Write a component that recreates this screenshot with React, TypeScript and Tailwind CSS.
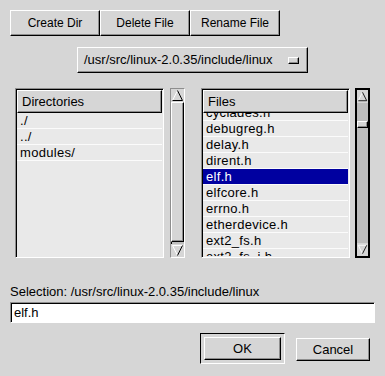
import React from 'react'

const raised =
  'border border-t-white border-l-white border-b-black border-r-black shadow-[inset_-1px_-1px_0_#8e8e8e]'
const sunken =
  'border border-t-[#8e8e8e] border-l-[#8e8e8e] border-b-white border-r-white shadow-[inset_1px_1px_0_#000]'

function ToolButton({ label }: { label: string }) {
  return (
    <div className={`${raised} w-[90px] h-[26px] flex items-center justify-center bg-[#d6d6d6] text-[12px]`}>
      {label}
    </div>
  )
}

function Arrow({ up }: { up: boolean }) {
  return (
    <svg width="13" height="13" viewBox="0 0 13 13" className="block">
      {up ? (
        <>
          <path d="M6.5 1.5 L1.5 11.5" stroke="#fff" strokeWidth="1" fill="none" />
          <path d="M6.5 1.5 L11.5 11.5 L1.5 11.5" stroke="#000" strokeWidth="1" fill="none" />
        </>
      ) : (
        <>
          <path d="M1.5 1.5 L11.5 1.5 M1.5 1.5 L6.5 11.5" stroke="#fff" strokeWidth="1" fill="none" />
          <path d="M11.5 1.5 L6.5 11.5" stroke="#000" strokeWidth="1" fill="none" />
        </>
      )}
    </svg>
  )
}

function Scrollbar({ focused, thumbTop, thumbHeight }: { focused?: boolean; thumbTop: number; thumbHeight: number }) {
  return (
    <div
      className={`w-[15px] h-full flex flex-col bg-[#bdbdbd] ${
        focused ? 'border-2 border-black' : sunken
      }`}
    >
      <div className="h-[13px] flex justify-center bg-[#d6d6d6]">
        <Arrow up />
      </div>
      <div className="flex-1 relative">
        <div
          className={`${raised} absolute left-0 right-0 bg-[#d6d6d6]`}
          style={{ top: thumbTop, height: thumbHeight }}
        />
      </div>
      <div className="h-[13px] flex justify-center bg-[#d6d6d6]">
        <Arrow up={false} />
      </div>
    </div>
  )
}

function ListPane({ title, rows, selected, offset }: { title: string; rows: string[]; selected?: string; offset?: number }) {
  return (
    <div className={`${sunken} w-[149px] h-full flex flex-col bg-[#e9e9e9] p-[1px]`}>
      <div className={`${raised} h-[23px] shrink-0 flex items-center pl-[4px] bg-[#d6d6d6]`}>{title}</div>
      <div className="flex-1 overflow-hidden">
        <div style={{ marginTop: offset ?? 0 }}>
          {rows.map((r) => (
            <div
              key={r}
              className={`h-[16px] leading-[15px] pl-[3px] tracking-[0.3px] border-b border-[#fbfbfb] ${
                r === selected ? 'bg-[#0000a0] text-white' : ''
              }`}
            >
              {r}
            </div>
          ))}
        </div>
      </div>
    </div>
  )
}

export default function App() {
  const files = [
    'cyclades.h',
    'debugreg.h',
    'delay.h',
    'dirent.h',
    'elf.h',
    'elfcore.h',
    'errno.h',
    'etherdevice.h',
    'ext2_fs.h',
    'ext2_fs_i.h',
  ]

  return (
    <div
      className="w-[385px] h-[376px] bg-[#d6d6d6] text-black text-[13px] leading-[14px] overflow-hidden"
      style={{ fontFamily: '"Liberation Sans", Arial, sans-serif' }}
    >
      <div className="pt-[10px] pl-[10px] flex">
        <ToolButton label="Create Dir" />
        <ToolButton label="Delete File" />
        <ToolButton label="Rename File" />
      </div>

      <div className="mt-[11px] ml-[77px]">
        <div className={`${raised} w-[231px] h-[26px] flex items-center pl-[6px] pr-[8px] bg-[#d6d6d6]`}>
          <span className="flex-1">/usr/src/linux-2.0.35/include/linux</span>
          <span className={`${raised} w-[11px] h-[7px] block`} />
        </div>
      </div>

      <div className="mt-[15px] ml-[15px] h-[170px] flex">
        <ListPane title="Directories" rows={['./', '../', 'modules/']} />
        <div className="ml-[6px] h-full">
          <Scrollbar thumbTop={0} thumbHeight={140} />
        </div>
        <div className="ml-[16px] h-full">
          <ListPane title="Files" rows={files} selected="elf.h" offset={-8} />
        </div>
        <div className="ml-[5px] h-full">
          <Scrollbar focused thumbTop={18} thumbHeight={7} />
        </div>
      </div>

      <div className="mt-[27px] ml-[10px]">Selection: /usr/src/linux-2.0.35/include/linux</div>

      <div className={`${sunken} mt-[3px] ml-[10px] w-[365px] h-[21px] bg-white flex items-center pl-[3px]`}>
        elf.h
      </div>

      <div className="mt-[10px] ml-[200px] flex items-start">
        <div className="border border-t-black border-l-black border-b-white border-r-white p-[3px] w-[85px]">
          <div className={`${raised} h-[23px] flex items-center justify-center bg-[#d6d6d6]`}>OK</div>
        </div>
        <div className={`${raised} mt-[5px] ml-[11px] w-[74px] h-[23px] flex items-center justify-center bg-[#d6d6d6]`}>
          Cancel
        </div>
      </div>
    </div>
  )
}
